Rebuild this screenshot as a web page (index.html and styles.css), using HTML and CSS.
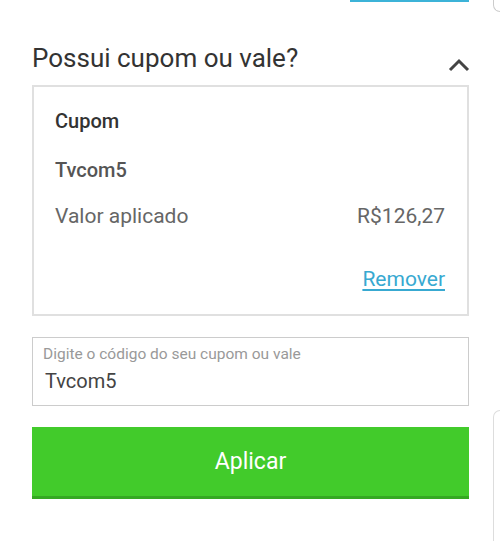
FILE: index.html
```html
<!DOCTYPE html>
<html lang="pt-BR">
<head>
<meta charset="utf-8">
<link rel="stylesheet" href="styles.css">
</head>
<body>
<div class="page">
  <div class="top-strip"><div class="top-tab"></div></div>
  <div class="section-head">
    <h2 class="section-title">Possui cupom ou vale?</h2>
    <svg class="chevron" width="22" height="14" viewBox="0 0 22 14"><path d="M2 12 L11 3 L20 12" fill="none" stroke="#444" stroke-width="3"/></svg>
  </div>
  <div class="coupon-card">
    <div class="coupon-label">Cupom</div>
    <div class="coupon-code">Tvcom5</div>
    <div class="coupon-row"><span>Valor aplicado</span><span>R$126,27</span></div>
    <div class="coupon-actions"><a class="remove-link" href="#">Remover</a></div>
  </div>
  <div class="field">
    <div class="field-label">Digite o código do seu cupom ou vale</div>
    <div class="field-value">Tvcom5</div>
  </div>
  <button class="apply-btn">Aplicar</button>
</div>
<div class="corner-top"></div>
<div class="side-panel"></div>
</body>
</html>
```
FILE: styles.css
```css
html, body {
  margin: 0;
  padding: 0;
  background: #fff;
}
body {
  font-family: Roboto, "Noto Sans", sans-serif;
  width: 500px;
  height: 541px;
  overflow: hidden;
  position: relative;
}
.page {
  padding: 0 31px 0 32px;
}
.top-strip {
  display: flex;
  justify-content: flex-end;
  height: 2px;
}
.top-tab {
  width: 119px;
  height: 2px;
  background: #3cb3d8;
}
.section-head {
  display: flex;
  align-items: flex-end;
  justify-content: space-between;
  margin-top: 40px;
  height: 32px;
}
.section-title {
  margin: 0;
  font-size: 26px;
  font-weight: 400;
  color: #333;
  line-height: 32px;
}
.chevron {
  margin-right: -1px;
  margin-bottom: 2px;
}
.coupon-card {
  margin-top: 11px;
  border: 2px solid #e0e0e0;
  height: 227px;
  padding: 0 22px 0 21px;
  box-sizing: content-box;
}
.coupon-label {
  margin-top: 22px;
  font-size: 20px;
  font-weight: 500;
  color: #333;
  line-height: 24px;
}
.coupon-code {
  margin-top: 25px;
  font-size: 20px;
  font-weight: 500;
  color: #555;
  line-height: 24px;
}
.coupon-row {
  margin-top: 22px;
  display: flex;
  justify-content: space-between;
  font-size: 21px;
  color: #666;
  line-height: 24px;
}
.coupon-actions {
  margin-top: 39px;
  display: flex;
  justify-content: flex-end;
  line-height: 24px;
}
.remove-link {
  font-size: 21px;
  color: #38a9d1;
  text-decoration: underline;
  text-underline-offset: 3px;
}
.field {
  margin-top: 21px;
  border: 1px solid #ccc;
  height: 67px;
  padding: 0 10px;
}
.field-label {
  margin-top: 7px;
  font-size: 15.5px;
  color: #999;
  line-height: 18px;
}
.field-value {
  margin-top: 6px;
  padding-left: 2px;
  font-size: 20px;
  color: #444;
  line-height: 24px;
}
.apply-btn {
  display: block;
  width: 100%;
  margin-top: 21px;
  height: 72px;
  border: 0;
  border-bottom: 3px solid #35a822;
  background: #42cb2b;
  color: #fff;
  font-family: Roboto, "Noto Sans", sans-serif;
  font-size: 23px;
  padding: 0;
}
.corner-top {
  position: absolute;
  left: 493px;
  top: 0;
  width: 7px;
  height: 11px;
  border-left: 1px solid #ccc;
  border-bottom: 1px solid #ccc;
  border-bottom-left-radius: 7px;
}
.side-panel {
  position: absolute;
  left: 493px;
  top: 410px;
  width: 6px;
  height: 131px;
  border-left: 1px solid #ddd;
  border-top: 1px solid #ddd;
  border-top-left-radius: 7px;
}
```
